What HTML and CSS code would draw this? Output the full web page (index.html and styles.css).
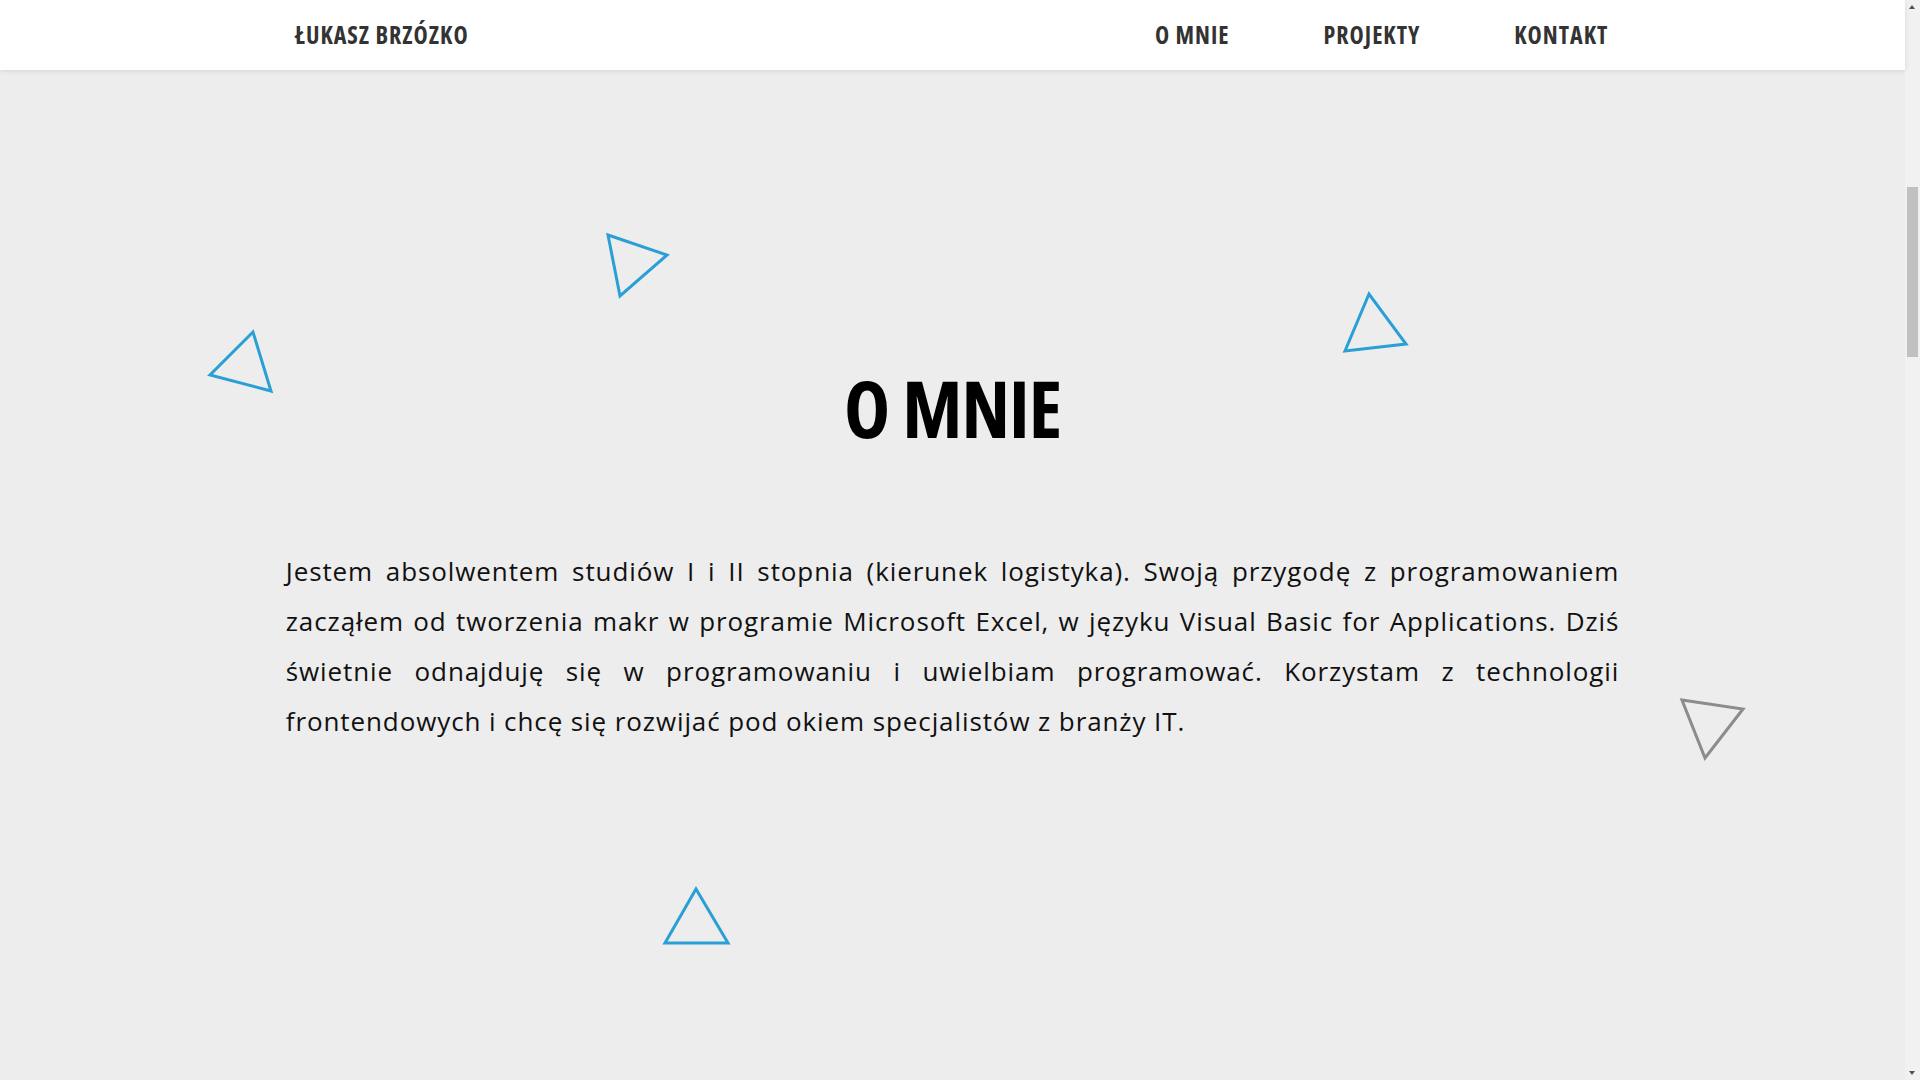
FILE: index.html
```html
<!DOCTYPE html>
<html lang="pl">
<head>
<meta charset="utf-8">
<title>Łukasz Brzózko</title>
<link rel="stylesheet" href="styles.css">
</head>
<body>
<div class="window">
  <div class="viewport">
    <svg class="shapes" viewBox="0 0 1905 1080" aria-hidden="true">
      <polygon class="tri tri--blue" points="253,332 210,375 271,391"/>
      <polygon class="tri tri--blue" points="608,235 667,255 620,296"/>
      <polygon class="tri tri--blue" points="1369,294 1345,351 1406,344"/>
      <polygon class="tri tri--gray" points="1682,700 1743,709 1705,758"/>
      <polygon class="tri tri--blue" points="696,889 665,943 728,943"/>
    </svg>

    <header class="topbar">
      <div class="topbar__inner">
        <a class="logo" href="#start">ŁUKASZ BRZÓZKO</a>
        <nav class="nav">
          <a class="nav__link" href="#o-mnie">O MNIE</a>
          <a class="nav__link" href="#projekty">PROJEKTY</a>
          <a class="nav__link" href="#kontakt">KONTAKT</a>
        </nav>
      </div>
    </header>

    <main class="about" id="o-mnie">
      <div class="container">
        <h2 class="section-title">O MNIE</h2>
        <p class="about__text">Jestem absolwentem studiów I i II stopnia (kierunek logistyka). Swoją przygodę z programowaniem zacząłem od tworzenia makr w programie Microsoft Excel, w języku Visual Basic for Applications. Dziś świetnie odnajduję się w programowaniu i uwielbiam programować. Korzystam z technologii frontendowych i chcę się rozwijać pod okiem specjalistów z branży IT.</p>
      </div>
    </main>
  </div>

  <div class="scrollbar" aria-hidden="true">
    <div class="scrollbar__btn scrollbar__btn--up"></div>
    <div class="scrollbar__track">
      <div class="scrollbar__thumb"></div>
    </div>
    <div class="scrollbar__btn scrollbar__btn--down"></div>
  </div>
</div>
</body>
</html>
```

FILE: styles.css
```css
* {
  box-sizing: border-box;
}

body {
  margin: 0;
  background: #ededed;
  color: #151515;
  font-family: "Open Sans", "Liberation Sans", sans-serif;
}

a {
  text-decoration: none;
  color: inherit;
}

.window {
  display: flex;
  height: 100vh;
  overflow: hidden;
}

.viewport {
  flex: 1;
  position: relative;
  display: flex;
  flex-direction: column;
}

.shapes {
  position: absolute;
  top: 0;
  left: 0;
  width: 100%;
  height: 100%;
  z-index: 0;
}

.tri {
  fill: none;
  stroke-width: 3;
}

.tri--blue {
  stroke: #2a9fd5;
}

.tri--gray {
  stroke: #8c8c8c;
}

.topbar {
  position: relative;
  z-index: 2;
  flex: none;
  height: 70px;
  background: #fff;
  box-shadow: 0 1px 5px rgba(0, 0, 0, 0.1);
}

.topbar__inner {
  width: 70%;
  height: 100%;
  margin: 0 auto;
  padding: 0 11px 2px 9px;
  display: flex;
  align-items: center;
  justify-content: space-between;
}

.logo,
.nav__link {
  font-family: "Open Sans", "Liberation Sans", sans-serif;
  font-stretch: 75%;
  font-weight: 700;
  font-size: 24px;
  letter-spacing: 1px;
  color: #333;
}

.nav {
  display: flex;
  gap: 94px;
}

.about {
  position: relative;
  z-index: 1;
  flex: 1;
  padding-top: 299px;
}

.container {
  width: 70%;
  margin: 0 auto;
}

.section-title {
  margin: 0 0 99px;
  text-align: center;
  font-family: "Open Sans", "Liberation Sans", sans-serif;
  font-stretch: 75%;
  font-weight: 700;
  font-size: 78px;
  letter-spacing: -1px;
  line-height: 1;
  color: #000;
}

.about__text {
  margin: 0;
  font-size: 26px;
  font-weight: 400;
  letter-spacing: 0.9px;
  line-height: 50px;
  text-align: justify;
  color: #111;
}

.scrollbar {
  flex: none;
  width: 15px;
  display: flex;
  flex-direction: column;
  background: #f1f1f1;
}

.scrollbar__btn {
  flex: none;
  height: 15px;
  position: relative;
}

.scrollbar__btn::after {
  content: "";
  position: absolute;
  left: 4px;
  border-left: 3.5px solid transparent;
  border-right: 3.5px solid transparent;
}

.scrollbar__btn--up::after {
  top: 5px;
  border-bottom: 4px solid #505050;
}

.scrollbar__btn--down::after {
  bottom: 5px;
  border-top: 4px solid #505050;
}

.scrollbar__track {
  flex: 1;
  padding: 172px 2px 0;
}

.scrollbar__thumb {
  height: 170px;
  background: #c1c1c1;
}
```
